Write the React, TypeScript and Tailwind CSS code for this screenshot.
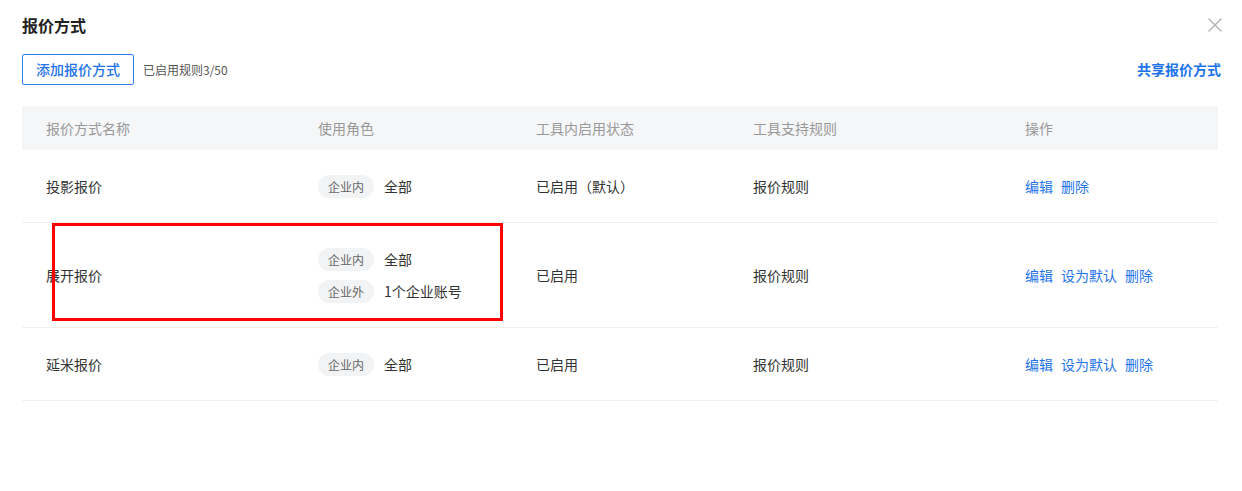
import { X } from "lucide-react";

type Role = { tag: string; value: string };

interface Row {
  name: string;
  roles: Role[];
  status: string;
  rule: string;
  actions: string[];
  height: string;
}

const rows: Row[] = [
  {
    name: "投影报价",
    roles: [{ tag: "企业内", value: "全部" }],
    status: "已启用（默认）",
    rule: "报价规则",
    actions: ["编辑", "删除"],
    height: "h-[73px]",
  },
  {
    name: "展开报价",
    roles: [
      { tag: "企业内", value: "全部" },
      { tag: "企业外", value: "1个企业账号" },
    ],
    status: "已启用",
    rule: "报价规则",
    actions: ["编辑", "设为默认", "删除"],
    height: "h-[105px]",
  },
  {
    name: "延米报价",
    roles: [{ tag: "企业内", value: "全部" }],
    status: "已启用",
    rule: "报价规则",
    actions: ["编辑", "设为默认", "删除"],
    height: "h-[73px]",
  },
];

const cols = "grid grid-cols-[272px_218px_217px_272px_1fr]";

export default function App() {
  return (
    <div className="relative w-[1242px] h-[491px] bg-white px-[22px] pt-[13px] text-[14px] text-[#333] font-['Noto_Sans_CJK_SC','Noto_Sans',sans-serif]">
      <div className="flex items-center justify-between h-6">
        <h1 className="text-[16px] font-bold text-[#222] leading-6">报价方式</h1>
        <X className="w-6 h-6 text-[#b3b3b3] mr-[-7px]" strokeWidth={1.4} />
      </div>

      <div className="mt-[17px] flex items-center justify-between w-[1199px]">
        <div className="flex items-center">
          <button className="h-[31px] w-[112px] rounded-[2px] border border-[#2f7ff0] text-[#1f74ea] text-[14px] font-medium">
            添加报价方式
          </button>
          <span className="ml-[9px] text-[12px] text-[#555]">已启用规则3/50</span>
        </div>
        <span className="text-[#1f74ea] font-bold">共享报价方式</span>
      </div>

      <div className="mt-[21px] w-[1196px]">
        <div className={`${cols} h-[44px] items-center bg-[#f5f6f8] text-[#999]`}>
          <div className="pl-6">报价方式名称</div>
          <div className="pl-6">使用角色</div>
          <div className="pl-6">工具内启用状态</div>
          <div className="pl-6">工具支持规则</div>
          <div className="pl-6">操作</div>
        </div>

        {rows.map((row) => (
          <div key={row.name} className={`${cols} ${row.height} items-center border-b border-[#f0f0f0]`}>
            <div className="pl-6">{row.name}</div>
            <div className="pl-6 flex flex-col gap-[9px]">
              {row.roles.map((r) => (
                <div key={r.tag} className="flex items-center">
                  <span className="h-[23px] px-[10px] rounded-full bg-[#f2f3f5] text-[12px] text-[#666] leading-[23px]">{r.tag}</span>
                  <span className="ml-[10px]">{r.value}</span>
                </div>
              ))}
            </div>
            <div className="pl-6">{row.status}</div>
            <div className="pl-6">{row.rule}</div>
            <div className="pl-6 flex gap-2 text-[#1f74ea]">
              {row.actions.map((a) => (
                <span key={a}>{a}</span>
              ))}
            </div>
          </div>
        ))}
      </div>

      <div className="absolute left-[52px] top-[223px] w-[451px] h-[98px] border-[3px] border-[#ff0000] pointer-events-none" />
    </div>
  );
}
